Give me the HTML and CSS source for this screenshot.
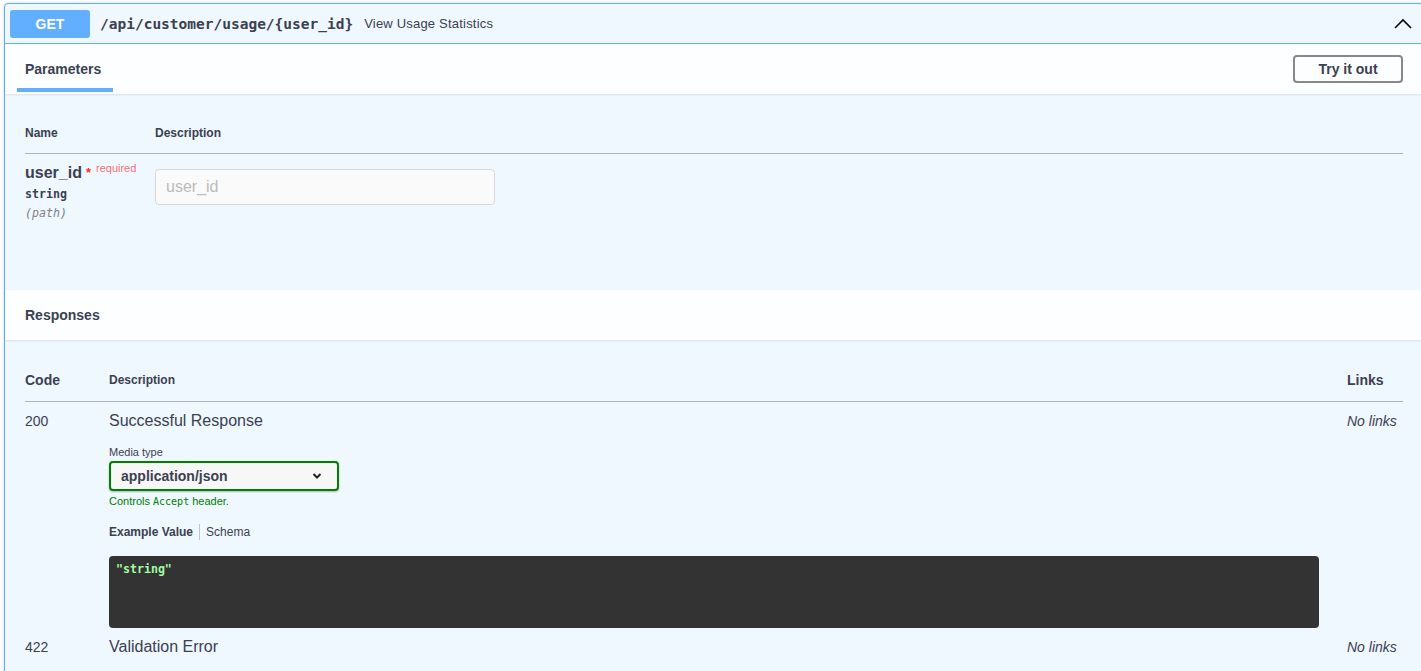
FILE: index.html
```html
<!DOCTYPE html>
<html lang="en">
<head>
    <meta charset="UTF-8">
    <meta name="viewport" content="width=device-width, initial-scale=1.0">
    <title>Customer API - Usage</title>
    <link rel="stylesheet" href="styles.css">
</head>
<body>

    <!-- GET operation block -->
    <div class="opblock">

        <!-- Summary bar -->
        <div class="opblock-summary">
            <span class="method">GET</span>
            <span class="path">/api/customer/usage/{user_id}</span>
            <span class="summary-desc">View Usage Statistics</span>
            <svg class="arrow" width="20" height="20" viewBox="0 0 20 20">
                <path d="M2 14 L10 6 L18 14" fill="none" stroke="#000" stroke-width="1.6"/>
            </svg>
        </div>

        <!-- Parameters header -->
        <div class="section-header">
            <div class="tab-item">Parameters</div>
            <button class="try-out">Try it out</button>
        </div>

        <!-- Parameters table -->
        <div class="params">
            <table class="params-table">
                <thead>
                    <tr>
                        <th class="col-name">Name</th>
                        <th>Description</th>
                    </tr>
                </thead>
                <tbody>
                    <tr>
                        <td>
                            <div class="param-name">user_id<span class="req">*</span><span class="req-label">required</span></div>
                            <div class="param-type">string</div>
                            <div class="param-in">(path)</div>
                        </td>
                        <td>
                            <input class="param-input" type="text" placeholder="user_id">
                        </td>
                    </tr>
                </tbody>
            </table>
        </div>

        <!-- Responses header -->
        <div class="section-header responses-header">
            <h4>Responses</h4>
        </div>

        <!-- Responses table -->
        <div class="responses">
            <table class="responses-table">
                <thead>
                    <tr>
                        <th class="col-code">Code</th>
                        <th class="small">Description</th>
                        <th class="col-links">Links</th>
                    </tr>
                </thead>
                <tbody>
                    <tr>
                        <td class="code">200</td>
                        <td class="desc">
                            <div class="desc-text">Successful Response</div>
                            <div class="media-label">Media type</div>
                            <div class="select">
                                <span>application/json</span>
                                <svg width="10" height="8" viewBox="0 0 10 8">
                                    <path d="M1.5 2 L5 5.5 L8.5 2" fill="none" stroke="#222" stroke-width="2"/>
                                </svg>
                            </div>
                            <div class="controls">Controls <span class="mono">Accept</span> header.</div>
                            <div class="example-tabs">
                                <span class="tab active">Example Value</span>
                                <span class="tab">Schema</span>
                            </div>
                            <pre class="example">"string"</pre>
                        </td>
                        <td class="links">No links</td>
                    </tr>
                    <tr>
                        <td class="code">422</td>
                        <td class="desc">
                            <div class="desc-text">Validation Error</div>
                        </td>
                        <td class="links">No links</td>
                    </tr>
                </tbody>
            </table>
        </div>
    </div>

</body>
</html>
```

FILE: styles.css
```css
/* Global */
* {
    margin: 0;
    padding: 0;
    box-sizing: border-box;
}

html, body {
    overflow: hidden;
}

body {
    background: #fff;
    font-family: "Liberation Sans", Arial, sans-serif;
    color: #3b4151;
    padding: 3px 0 0 4px;
}

/* Operation block */
.opblock {
    width: 1420px;
    border: 1px solid #61affe;
    border-radius: 4px;
    background: #eff7ff;
    box-shadow: 0 0 3px rgba(0, 0, 0, 0.19);
}

.opblock-summary {
    display: flex;
    align-items: center;
    height: 40px;
    padding: 0 5px;
    border-bottom: 1px solid #61affe;
}

.method {
    display: flex;
    align-items: center;
    justify-content: center;
    width: 80px;
    height: 28px;
    background: #61affe;
    border-radius: 3px;
    color: #fff;
    font-size: 14px;
    font-weight: bold;
}

.path {
    margin-left: 10px;
    font-family: "DejaVu Sans Mono", monospace;
    font-size: 14.5px;
    font-weight: bold;
}

.summary-desc {
    margin-left: 11px;
    font-size: 13px;
    letter-spacing: 0.2px;
}

.arrow {
    margin-left: auto;
    margin-right: 5px;
}

/* Section headers */
.section-header {
    display: flex;
    align-items: flex-end;
    height: 50px;
    padding: 0 20px 2px 12px;
    background: rgba(255, 255, 255, 0.8);
    box-shadow: 0 1px 2px rgba(0, 0, 0, 0.1);
}

.tab-item {
    width: 96px;
    padding: 0 8px 10px;
    border-bottom: 4px solid #61affe;
    font-size: 14px;
    font-weight: bold;
    line-height: 17px;
}

.try-out {
    align-self: center;
    margin-left: auto;
    margin-bottom: -2px;
    width: 110px;
    height: 28px;
    border: 2px solid #888;
    border-radius: 4px;
    background: transparent;
    color: #3b4151;
    font-family: "Liberation Sans", Arial, sans-serif;
    font-size: 14px;
    font-weight: bold;
}

.responses-header {
    align-items: center;
    padding: 0 20px;
}

.responses-header h4 {
    font-size: 14px;
    font-weight: bold;
}

/* Parameters */
.params {
    height: 196px;
    padding: 20px 20px 0;
}

table {
    width: 100%;
    border-collapse: collapse;
    table-layout: fixed;
}

th {
    text-align: left;
    font-weight: bold;
    border-bottom: 1px solid rgba(59, 65, 81, 0.2);
}

td {
    vertical-align: top;
}

.params-table th {
    font-size: 12px;
    line-height: 14px;
    padding: 12px 0 13px;
}

.params-table td {
    padding-top: 9px;
}

.col-name {
    width: 130px;
}

.param-name {
    font-size: 16px;
    font-weight: bold;
    line-height: 19px;
}

.req {
    color: #ff2b2b;
    font-size: 13px;
    vertical-align: top;
    margin-left: 4px;
}

.req-label {
    color: rgba(255, 0, 0, 0.6);
    font-size: 11px;
    font-weight: normal;
    vertical-align: top;
    position: relative;
    top: -4px;
    margin-left: 5px;
}

.param-type {
    margin-top: 5px;
    font-family: "DejaVu Sans Mono", monospace;
    font-size: 11.6px;
    font-weight: bold;
    line-height: 15px;
}

.param-in {
    margin-top: 4px;
    font-family: "DejaVu Sans Mono", monospace;
    font-size: 11.6px;
    font-style: italic;
    line-height: 15px;
    color: #808080;
}

.param-input {
    display: block;
    width: 340px;
    height: 36px;
    margin-top: 6px;
    padding: 8px 10px;
    border: 1px solid #d9d9d9;
    border-radius: 4px;
    background: #fafafa;
    font-family: "Liberation Sans", Arial, sans-serif;
    font-size: 16px;
    color: #3b4151;
}

.param-input::placeholder {
    color: #bbb;
}

/* Responses */
.responses {
    padding: 20px 20px 40px;
}

.responses-table th {
    font-size: 14px;
    line-height: 17px;
    padding: 12px 0;
}

.responses-table th.small {
    font-size: 12px;
}

.col-code {
    width: 84px;
}

.col-links {
    width: 56px;
}

.responses-table td {
    padding-top: 9px;
}

.code {
    font-size: 14px;
    line-height: 20px;
}

.desc {
    padding-right: 28px;
}

.desc-text {
    font-size: 16px;
    line-height: 20px;
}

.links {
    font-size: 14px;
    font-style: italic;
    line-height: 20px;
}

.media-label {
    margin-top: 14px;
    font-size: 11px;
    line-height: 14px;
}

.select {
    display: flex;
    align-items: center;
    width: 230px;
    height: 30px;
    margin-top: 2px;
    padding: 0 15px 0 10px;
    border: 2px solid #008000;
    border-radius: 4px;
    background: #f7f7f7;
    box-shadow: 0 1px 2px rgba(0, 0, 0, 0.25);
    font-size: 14px;
    font-weight: bold;
}

.select svg {
    margin-left: auto;
}

.controls {
    margin-top: 4px;
    font-size: 11px;
    line-height: 13px;
    color: #008000;
}

.mono {
    font-family: "DejaVu Sans Mono", monospace;
    font-size: 10px;
}

.example-tabs {
    display: flex;
    margin-top: 16px;
    font-size: 12px;
    line-height: 16px;
}

.tab + .tab {
    margin-left: 6px;
    padding-left: 6px;
    border-left: 1px solid rgba(0, 0, 0, 0.2);
}

.tab.active {
    font-weight: bold;
}

.example {
    height: 72px;
    margin-top: 16px;
    padding: 7px;
    background: #333;
    border-radius: 4px;
    color: #a2fca2;
    font-family: "DejaVu Sans Mono", monospace;
    font-size: 11.6px;
    font-weight: bold;
    line-height: 13px;
}
```
